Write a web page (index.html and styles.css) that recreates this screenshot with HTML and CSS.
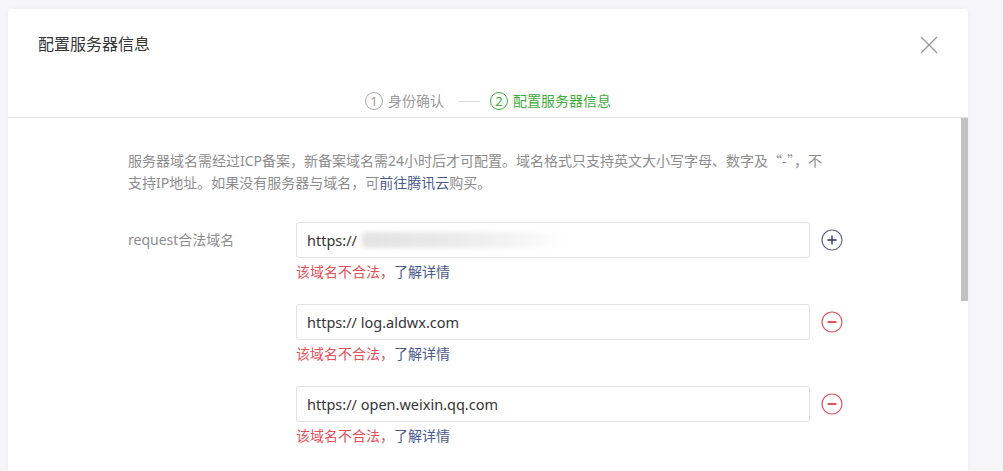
FILE: index.html
```html
<!DOCTYPE html>
<html lang="zh-CN">
<head>
    <meta charset="UTF-8">
    <meta name="viewport" content="width=device-width, initial-scale=1.0">
    <title>配置服务器信息</title>
    <link rel="stylesheet" href="styles.css">
</head>
<body>
    <div class="dialog">
        <div class="dialog-hd">
            <div class="title-row">
                <h3 class="dialog-title">配置服务器信息</h3>
                <a class="close" href="#" title="关闭">
                    <svg width="18" height="18" viewBox="0 0 18 18"><path d="M1 1L17 17M17 1L1 17" stroke="#9a9a9a" stroke-width="1.3" fill="none"/></svg>
                </a>
            </div>
            <div class="steps">
                <span class="step"><i class="step-num">1</i>身份确认</span>
                <span class="step-line"></span>
                <span class="step current"><i class="step-num">2</i>配置服务器信息</span>
            </div>
        </div>

        <div class="dialog-main">
            <div class="dialog-bd">
                <p class="tips">服务器域名需经过ICP备案，新备案域名需24小时后才可配置。域名格式只支持英文大小写字母、数字及<span class="cjk">“-”</span>，不支持IP地址。如果没有服务器与域名，可<a href="#">前往腾讯云</a>购买。</p>

                <div class="form-row">
                    <label class="form-label">request合法域名</label>
                    <div class="form-controls">
                        <div class="field">
                            <div class="input-box">https://<span class="masked"></span></div>
                            <a class="op" href="#">
                                <svg width="22" height="22" viewBox="0 0 22 22"><circle cx="11" cy="11" r="10" stroke="#5b6797" stroke-width="1.2" fill="none"/><path d="M11 6.5V15.5M6.5 11H15.5" stroke="#4d5a8c" stroke-width="1.8"/></svg>
                            </a>
                        </div>
                        <p class="err">该域名不合法，<a href="#">了解详情</a></p>

                        <div class="field">
                            <div class="input-box">https:// log.aldwx.com</div>
                            <a class="op" href="#">
                                <svg width="22" height="22" viewBox="0 0 22 22"><circle cx="11" cy="11" r="10" stroke="#e5545a" stroke-width="1.2" fill="none"/><path d="M6.5 11H15.5" stroke="#e5404a" stroke-width="1.8"/></svg>
                            </a>
                        </div>
                        <p class="err">该域名不合法，<a href="#">了解详情</a></p>

                        <div class="field">
                            <div class="input-box">https:// open.weixin.qq.com</div>
                            <a class="op" href="#">
                                <svg width="22" height="22" viewBox="0 0 22 22"><circle cx="11" cy="11" r="10" stroke="#e5545a" stroke-width="1.2" fill="none"/><path d="M6.5 11H15.5" stroke="#e5404a" stroke-width="1.8"/></svg>
                            </a>
                        </div>
                        <p class="err">该域名不合法，<a href="#">了解详情</a></p>
                    </div>
                </div>
            </div>
            <div class="scrollbar"><div class="scrollbar-thumb"></div></div>
        </div>
    </div>
</body>
</html>
```

FILE: styles.css
```css
html, body {
    height: 100%;
}
body {
    margin: 0;
    padding: 9px 0 0 8px;
    box-sizing: border-box;
    background: #f6f6f8;
    font-family: "Noto Sans", "Noto Sans CJK SC", sans-serif;
    color: #353535;
    overflow: hidden;
}
a {
    text-decoration: none;
}
.dialog {
    width: 960px;
    height: 462px;
    background: #fff;
    border-radius: 4px 4px 0 0;
    box-shadow: 0 0 6px rgba(0,0,0,0.04);
    display: flex;
    flex-direction: column;
}
.dialog-hd {
    flex: none;
    height: 109px;
    box-sizing: border-box;
    border-bottom: 1px solid #e2e2e2;
}
.title-row {
    display: flex;
    align-items: center;
    justify-content: space-between;
    padding: 22px 30px 0;
    height: 26px;
}
.dialog-title {
    margin: 0;
    font-size: 16px;
    font-weight: normal;
    line-height: 26px;
    color: #353535;
}
.close {
    display: flex;
    width: 18px;
    height: 18px;
    margin-top: 1px;
}
.steps {
    display: flex;
    justify-content: center;
    align-items: center;
    margin-top: 34px;
    font-size: 14px;
    line-height: 20px;
    color: #9a9a9a;
}
.step {
    display: flex;
    align-items: center;
}
.step-num {
    width: 16px;
    height: 16px;
    border: 1px solid #a8a8a8;
    border-radius: 50%;
    font-style: normal;
    font-size: 13px;
    line-height: 16px;
    text-align: center;
    margin-right: 5px;
}
.step-line {
    width: 22px;
    height: 1px;
    background: #dcdcdc;
    margin: 0 10px 0 14px;
}
.step.current {
    color: #3ead3c;
}
.step.current .step-num {
    border-color: #3ead3c;
}
.dialog-main {
    flex: 1;
    display: flex;
    min-height: 0;
}
.dialog-bd {
    flex: 1;
    overflow: hidden;
    padding: 32px 0 0 120px;
}
.scrollbar {
    width: 7px;
    flex: none;
}
.scrollbar-thumb {
    height: 183px;
    background: #c1c1c1;
}
.tips {
    margin: 0 0 28px;
    width: 703px;
    font-size: 14px;
    line-height: 22px;
    color: #8d8d8d;
}
.tips .cjk {
    font-family: "Noto Sans CJK SC", sans-serif;
    line-height: 1;
}
.tips a {
    color: #4a5a8c;
}
.form-row {
    display: flex;
}
.form-label {
    width: 168px;
    flex: none;
    font-size: 14px;
    line-height: 36px;
    color: #8d8d8d;
}
.field {
    display: flex;
    align-items: center;
}
.err + .field {
    margin-top: 22px;
}
.input-box {
    width: 514px;
    height: 36px;
    box-sizing: border-box;
    border: 1px solid #e2e2e2;
    border-radius: 3px;
    padding: 0 10px;
    font-size: 14.5px;
    line-height: 34px;
    color: #353535;
    display: flex;
    align-items: center;
    white-space: pre;
}
.masked {
    width: 205px;
    height: 16px;
    margin-left: 4px;
    background: linear-gradient(to right, #e2e2e2, #eaeaea 45%, #f6f6f6 80%, #fff);
    filter: blur(2.5px);
    border-radius: 6px;
}
.op {
    display: flex;
    margin-left: 11px;
}
.err {
    margin: 4px 0 0;
    font-size: 14px;
    line-height: 20px;
    color: #e0515a;
}
.err a {
    color: #4a5a8c;
}
```
